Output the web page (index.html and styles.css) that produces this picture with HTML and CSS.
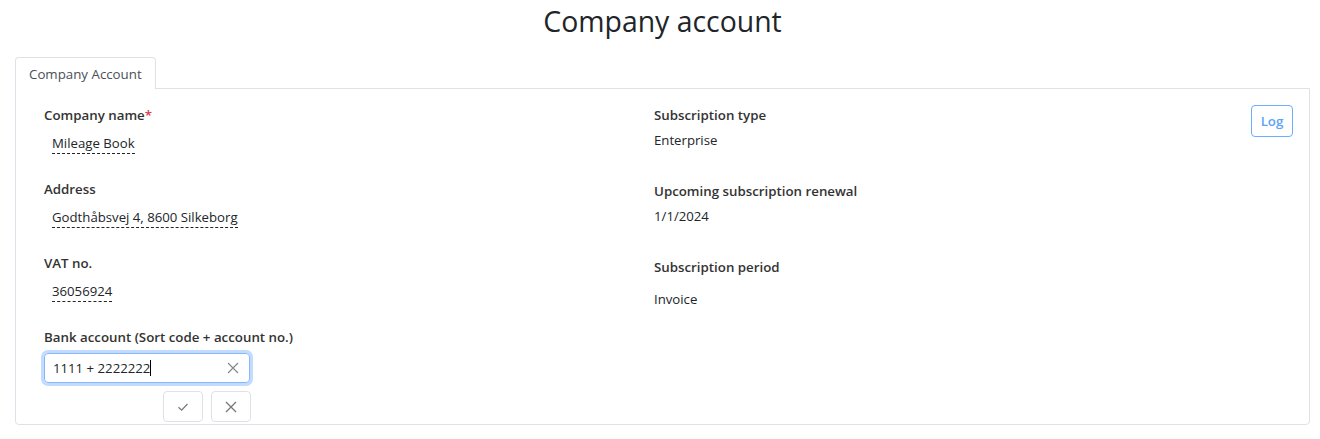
FILE: index.html
```html
<!DOCTYPE html>
<html lang="en">
<head>
<meta charset="utf-8">
<title>Company account</title>
<link rel="stylesheet" href="styles.css">
</head>
<body>
<h1 class="page-title">Company account</h1>
<div class="tabs">
  <div class="tab active">Company Account</div>
</div>
<div class="panel">
  <div class="grid">
    <div class="col">
      <div class="field">
        <div class="label">Company name<span class="req">*</span></div>
        <div class="value editable"><span>Mileage Book</span></div>
      </div>
      <div class="field">
        <div class="label">Address</div>
        <div class="value editable"><span>Godthåbsvej 4, 8600 Silkeborg</span></div>
      </div>
      <div class="field">
        <div class="label">VAT no.</div>
        <div class="value editable"><span>36056924</span></div>
      </div>
      <div class="field">
        <div class="label">Bank account (Sort code + account no.)</div>
        <div class="input-wrap">
          <span class="input-text">1111 + 2222222<span class="caret"></span></span>
          <svg class="clear" width="12" height="12" viewBox="0 0 12 12"><path d="M1 1 11 11M11 1 1 11" stroke="#888" stroke-width="1.2" fill="none"/></svg>
        </div>
        <div class="actions">
          <button class="icon-btn" type="button"><svg width="14" height="14" viewBox="0 0 14 14"><path d="M2.5 7.2 5.6 10.2 11.5 4" stroke="#777" stroke-width="1.2" fill="none"/></svg></button>
          <button class="icon-btn" type="button"><svg width="14" height="14" viewBox="0 0 14 14"><path d="M2 2 12 12M12 2 2 12" stroke="#777" stroke-width="1.3" fill="none"/></svg></button>
        </div>
      </div>
    </div>
    <div class="col">
      <div class="field">
        <div class="label">Subscription type</div>
        <div class="value plain">Enterprise</div>
      </div>
      <div class="field">
        <div class="label">Upcoming subscription renewal</div>
        <div class="value plain">1/1/2024</div>
      </div>
      <div class="field">
        <div class="label">Subscription period</div>
        <div class="value plain period">Invoice</div>
      </div>
    </div>
  </div>
  <button class="log-btn" type="button">Log</button>
</div>
</body>
</html>
```
FILE: styles.css
```css
* { box-sizing: border-box; }
body {
  margin: 0;
  padding: 0 10px 0 15px;
  font-family: "Open Sans", "Noto Sans", sans-serif;
  color: #212529;
  background: #fff;
}
.page-title {
  margin: 0;
  padding-top: 1px;
  height: 57px;
  text-align: center;
  font-weight: 400;
  font-size: 28.4px;
  line-height: 40px;
}
.tabs {
  display: flex;
  height: 32px;
}
.tab {
  padding: 0 13px;
  border: 1px solid #dee2e6;
  border-bottom: none;
  border-radius: 4px 4px 0 0;
  background: #fff;
  font-size: 13.3px;
  line-height: 32px;
  color: #495057;
  position: relative;
  z-index: 1;
  height: 32px;
}
.panel {
  position: relative;
  border: 1px solid #dee2e6;
  border-radius: 0 0 4px 4px;
  margin-top: -1px;
  padding: 15px 28px 0 28px;
  height: 337px;
}
.grid {
  display: grid;
  grid-template-columns: 610px 1fr;
}
.label {
  font-size: 13.3px;
  font-weight: 600;
  color: #333;
  line-height: 22px;
}
.req { color: #dc3545; }
.value {
  font-size: 13.2px;
  line-height: 20px;
}
.editable {
  padding: 7px 8px 0;
  height: 52px;
}
.editable span {
  border-bottom: 1px dashed #212529;
  padding-bottom: 1px;
}
.plain {
  padding-top: 4px;
  height: 54px;
}
.plain.period { padding-top: 11px; }
.input-wrap {
  margin-top: 5px;
  width: 206px;
  height: 30px;
  border: 1px solid #86b7fe;
  border-radius: 4px;
  box-shadow: 0 0 0 3px rgba(13, 110, 253, 0.25);
  display: flex;
  align-items: center;
  justify-content: space-between;
  padding: 0 10px 0 8px;
  font-size: 13.2px;
}
.caret {
  display: inline-block;
  width: 1px;
  height: 16px;
  background: #000;
  vertical-align: -3px;
}
.actions {
  display: flex;
  justify-content: flex-end;
  gap: 8px;
  width: 207px;
  margin-top: 8px;
}
.icon-btn {
  width: 40px;
  height: 31px;
  border: 1px solid #dee2e6;
  border-radius: 4px;
  background: #fff;
  display: flex;
  align-items: center;
  justify-content: center;
  padding: 0;
}
.log-btn {
  position: absolute;
  top: 16px;
  right: 16px;
  width: 42px;
  height: 32px;
  border: 1px solid #6aaefc;
  border-radius: 4px;
  background: #fff;
  color: #5aa4f8;
  font-family: inherit;
  font-size: 13.3px;
  font-weight: 600;
  padding: 0;
}
```
